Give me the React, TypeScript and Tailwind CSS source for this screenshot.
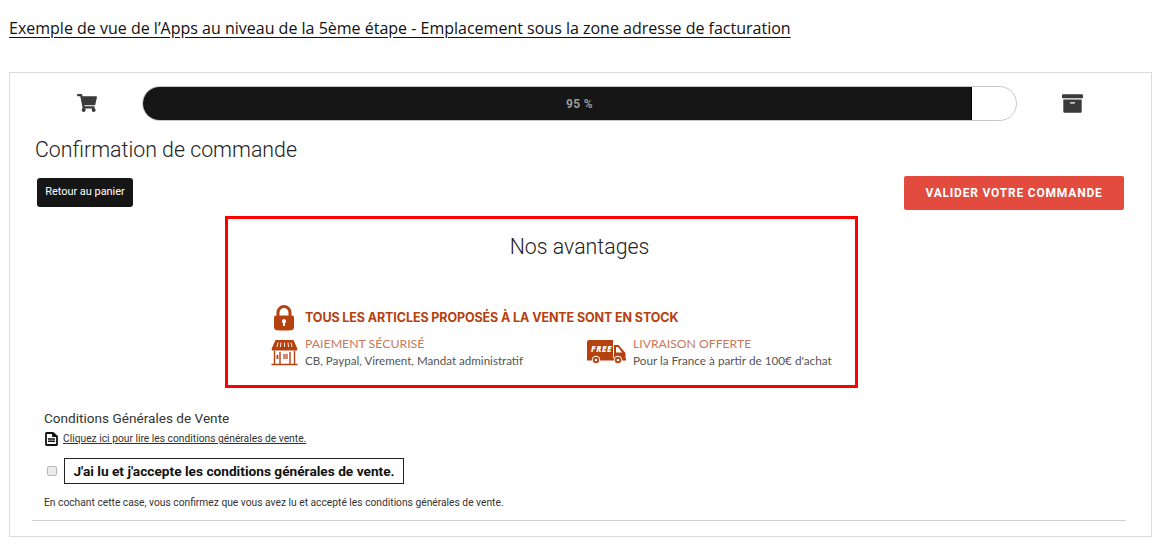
import React from "react";
import { FaShoppingCart, FaArchive } from "react-icons/fa";

const Lock = () => (
  <svg width="22" height="26" viewBox="0 0 22 26" className="shrink-0">
    <path d="M5 11V7.5a6 6 0 0 1 12 0V11" fill="none" stroke="#b5410f" strokeWidth="3" />
    <path fillRule="evenodd" d="M3 10.5h16a2 2 0 0 1 2 2V22c0 2-1 3-3 3.2-4 .5-10 .5-14 0-2-.2-3-1.200-3-3.200v-9.500a2 2 0 0 1 2-2ZM11 14a2.200 2.200 0 0 0-1 4.100V21h2v-2.900A2.200 2.200 0 0 0 11 14Z" fill="#b5410f" />
  </svg>
);

const Store = () => (
  <svg width="27" height="27" viewBox="0 0 27 27" className="shrink-0">
    <path d="M4.500 1h18l4 9a2 2 0 0 1-2.500 1.500h-21A2 2 0 0 1 .5 10Z" fill="#b5410f" />
    <path d="M7 3.500 6 8M10 3.500 9.500 8M13.500 3.500V8M17 3.500l.5 4.500M20 3.500l1 4.500" stroke="#fff" strokeWidth="0.9" />
    <path d="M3.500 12v13M23.500 12v13M9 13v12M19 13v12" stroke="#b5410f" strokeWidth="1.400" fill="none" />
    <path d="M.5 25.500h26" stroke="#b5410f" strokeWidth="1.500" />
    <rect x="5.500" y="16" width="1.800" height="4" fill="#b5410f" />
    <rect x="12" y="15" width="5" height="5" fill="#d98a68" />
  </svg>
);

const Truck = () => (
  <svg width="39" height="25" viewBox="0 0 39 25" className="shrink-0">
    <path d="M0 2a2 2 0 0 1 2-2h24v19H0Z" fill="#b5410f" />
    <path d="M27 5h4.500L38.500 13v6H27Z" fill="#b5410f" />
    <path d="M29 7h2l4 5.500h-6Z" fill="#fff" />
    <rect x="0" y="18" width="39" height="2.500" fill="#b5410f" />
    <circle cx="9" cy="20" r="3.800" fill="#b5410f" stroke="#fff" strokeWidth="1" />
    <circle cx="9" cy="20" r="1.300" fill="#fff" />
    <circle cx="31" cy="20" r="3.800" fill="#b5410f" stroke="#fff" strokeWidth="1" />
    <circle cx="31" cy="20" r="1.300" fill="#fff" />
    <text x="4" y="11.500" fill="#fff" fontSize="8" fontWeight="800" fontStyle="italic" fontFamily="'Open Sans', sans-serif" letterSpacing="0.6">FREE</text>
  </svg>
);

const FileIcon = () => (
  <svg width="13" height="14" viewBox="0 0 13 14" className="shrink-0">
    <path d="M1 1.500a.5.5 0 0 1 .5-.5H8l4 3.500v8a.5.500 0 0 1-.5.500h-10a.5.500 0 0 1-.5-.500Z" fill="#fff" stroke="#111" strokeWidth="1.800" strokeLinejoin="round" />
    <path d="M3 7h7M3 9.300h7" stroke="#111" strokeWidth="1.400" />
    <path d="M7.500 1v3.500H12" fill="#111" stroke="#111" strokeWidth="1" />
  </svg>
);

export default function App() {
  return (
    <div className="w-[1172px] h-[554px] overflow-hidden bg-white font-['Roboto',sans-serif] text-[#222]">
      <div className="pl-[9px] pr-[20px]">
        <p className="pt-[17px] h-[72px] font-['Open_Sans',sans-serif] text-[16px] leading-[22px] text-[#111] underline underline-offset-[3px]">
          Exemple de vue de l’Apps au niveau de la 5ème étape - Emplacement sous la zone adresse de facturation
        </p>

        <div className="h-[465px] border border-[#dcdcdc] flex flex-col pl-[22px] pr-[25px]">
          {/* progress */}
          <div className="flex items-center h-[34px] mt-[13px] shrink-0">
            <div className="w-[110px] flex justify-center shrink-0 text-[#3a3a3a]">
              <FaShoppingCart size={20} />
            </div>
            <div className="relative w-[875px] h-[35px] rounded-full border border-[#c8c8c8] overflow-hidden bg-white shrink-0">
              <div className="w-[829px] h-full bg-[#161616] border-r border-black" />
              <span className="absolute inset-0 flex items-center justify-center pt-[2px] text-[12px] font-bold text-[#9a9a9a] tracking-[0.3px]">
                95 %
              </span>
            </div>
            <div className="flex-1 flex justify-center pl-[2px] text-[#3a3a3a]">
              <FaArchive size={21} />
            </div>
          </div>

          <h1 className="mt-[15px] ml-[3px] text-[21.33px] leading-[30px] font-light text-[#222]">Confirmation de commande</h1>

          <div className="flex items-start justify-between -mt-[1px] pr-[2px]">
            <button className="mt-[14px] ml-[5px] h-[29px] w-[96px] rounded-[3px] bg-[#161616] text-white text-[11px] tracking-[-0.05px]">
              Retour au panier
            </button>
            <button className="mt-[12px] h-[34px] w-[220px] rounded-[2px] bg-[#e34b3f] text-white text-[12px] font-bold tracking-[0.8px]">
              VALIDER VOTRE COMMANDE
            </button>
          </div>

          {/* avantages */}
          <div className="mt-[6px] ml-[193px] w-[633px] h-[172px] border-[3px] border-[#ff0000] shrink-0 flex flex-col">
            <div className="text-center text-[21.33px] leading-[30px] font-light text-[#222] mt-[13px] pl-[76px]">Nos avantages</div>
            <div className="flex items-center mt-[43px] ml-[45px] gap-[10px]">
              <Lock />
              <span className="font-['Inter',sans-serif] text-[12.5px] font-bold text-[#b5410f] tracking-[-0.1px]">
                TOUS LES ARTICLES PROPOSÉS À LA VENTE SONT EN STOCK
              </span>
            </div>
            <div className="flex mt-[4px] ml-[43px]">
              <div className="flex items-center gap-[7px] w-[316px]">
                <Store />
                <div>
                  <div className="font-['Lato',sans-serif] text-[12.3px] leading-[17px] text-[#c9785a]">PAIEMENT SÉCURISÉ</div>
                  <div className="font-['Lato',sans-serif] text-[11.6px] leading-[18px] text-[#555]">CB, Paypal, Virement, Mandat administratif</div>
                </div>
              </div>
              <div className="flex items-center gap-[7px]">
                <Truck />
                <div>
                  <div className="font-['Lato',sans-serif] text-[12.2px] leading-[17px] text-[#c9785a]">LIVRAISON OFFERTE</div>
                  <div className="font-['Lato',sans-serif] text-[11.75px] leading-[18px] text-[#555]">Pour la France à partir de 100€ d'achat</div>
                </div>
              </div>
            </div>
          </div>

          {/* conditions */}
          <div className="ml-[12px] mt-[20px] text-[13.6px] leading-[20px] text-[#333]">Conditions Générales de Vente</div>
          <div className="ml-[13px] mt-[2px] flex items-center gap-[5px] h-[18px]">
            <FileIcon />
            <a className="text-[10.27px] underline text-[#333]">Cliquez ici pour lire les conditions générales de vente.</a>
          </div>
          <div className="ml-[15px] mt-[10px] flex items-center gap-[7px]">
            <input type="checkbox" readOnly className="appearance-none w-[10px] h-[10px] rounded-[2px] border border-[#b5b5b5] bg-[#ececec]" />
            <span className="h-[26px] w-[340px] border border-[#222] flex items-center justify-center text-[13.7px] font-bold text-[#111] whitespace-nowrap">
              J'ai lu et j'accepte les conditions générales de vente.
            </span>
          </div>
          <div className="ml-[12px] mt-[12px] text-[10.25px] leading-[14px] text-[#333]">
            En cochant cette case, vous confirmez que vous avez lu et accepté les conditions générales de vente.
          </div>
          <div className="mt-[10px] h-[1px] bg-[#cfcfcf]" />
        </div>
      </div>
    </div>
  );
}
